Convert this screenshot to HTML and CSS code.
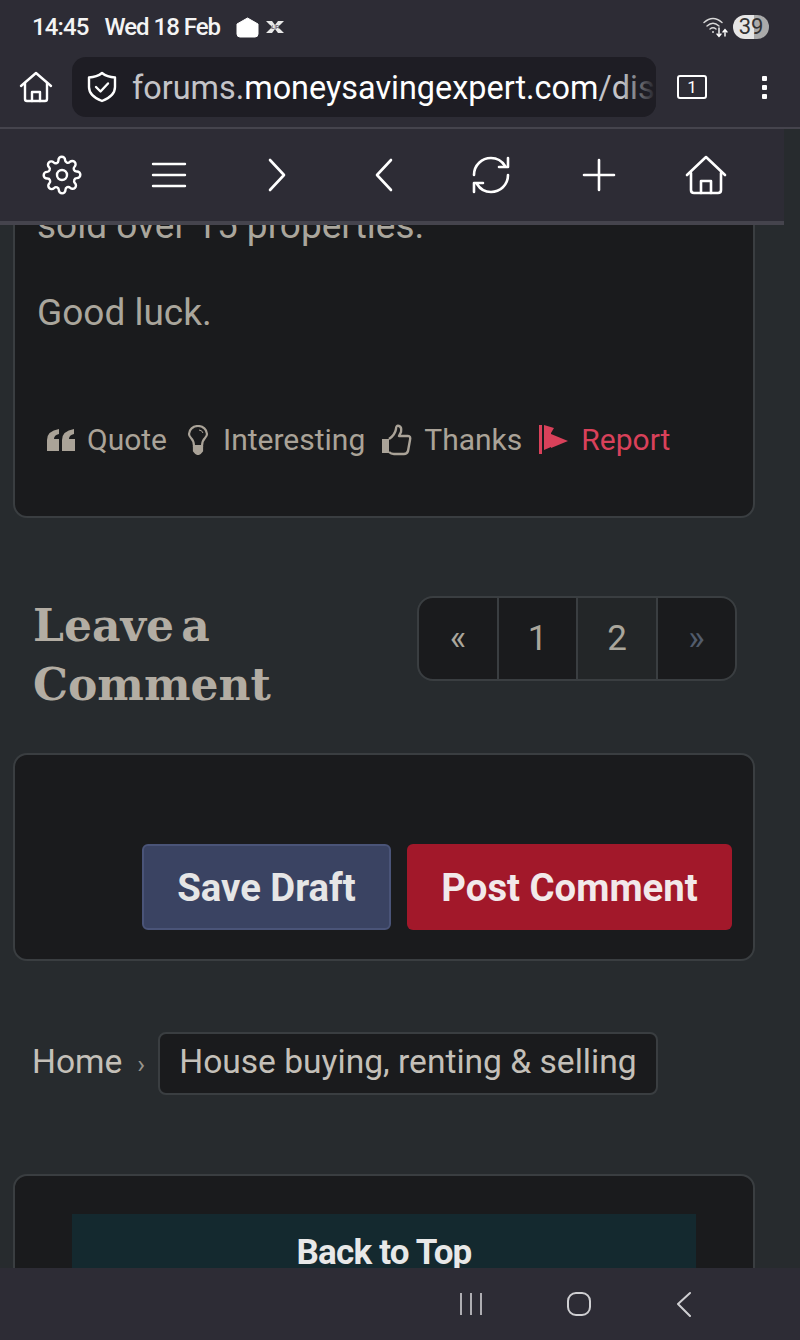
FILE: index.html
```html
<!DOCTYPE html>
<html lang="en">
<head>
<meta charset="UTF-8" />
<title>Leave a Comment</title>
<meta name="viewport" content="width=device-width, initial-scale=1.0" />
<link rel="stylesheet" href="styles.css">
</head>
<body>
<div id="screen">
    <header id="chrome">
        <div class="status">
            <span class="clock">14:45</span>
            <span class="date">Wed 18 Feb</span>
            <svg class="st-shape" width="23" height="21" viewBox="0 0 23 21"><path d="M11.5 1 L22 7 V17 Q22 20 19 20 H4 Q1 20 1 17 V7 Z" fill="#fff" stroke="#fff" stroke-linejoin="round"/></svg>
            <svg class="st-halifax" width="20" height="14" viewBox="0 0 20 14">
                <path d="M1 1 H7 L10 5 L13 1 H19 L13 7 L19 13 H13 L10 9 L7 13 H1 L7 7 Z" fill="#e8e8e8"/>
                <text x="10" y="8.5" text-anchor="middle" class="halifax-txt">HALIFAX</text>
            </svg>
            <span class="status-gap"></span>
            <svg class="st-wifi" width="26" height="22" viewBox="0 0 26 22" fill="none" stroke="#d8d8d8" stroke-width="1.4" stroke-linecap="round">
                <path d="M1 6.5 Q10 -1.5 19 6.5"/>
                <path d="M4 10 Q10 4.5 16 10"/>
                <path d="M7 13 Q10 10.5 13 13"/>
                <circle cx="10" cy="16" r="1" fill="#d8d8d8" stroke="none"/>
                <path d="M16 12 V20 M14 18 L16 20.5 L18 18" stroke="#fff"/>
                <path d="M22 20 V14 M20 16 L22 13.5 L24 16" stroke="#fff"/>
            </svg>
            <span class="battery">39</span>
        </div>
        <div class="urlrow">
            <svg class="icon" width="34" height="34" viewBox="0 0 34 34" fill="none" stroke="#fff" stroke-width="2.4" stroke-linejoin="round" stroke-linecap="round">
                <path d="M2 16 L17 3 L32 16"/>
                <path d="M6 13 V29 Q6 31 8 31 H26 Q28 31 28 29 V13"/>
                <path d="M13 31 V22 H21 V31"/>
            </svg>
            <div class="urlbar">
                <svg class="icon" width="30" height="32" viewBox="0 0 30 32" fill="none" stroke="#fff" stroke-width="2.4" stroke-linejoin="round" stroke-linecap="round">
                    <path d="M15 2 Q20 6 28 6.5 V16 Q28 25 15 30 Q2 25 2 16 V6.5 Q10 6 15 2 Z"/>
                    <path d="M9 16 L13.5 20.5 L21 12.5"/>
                </svg>
                <div class="urltext"><span class="dim">forums.</span>moneysavingexpert.com<span class="dim">/dis</span></div>
            </div>
            <div class="tabcount">1</div>
            <div class="kebab"><i></i><i></i><i></i></div>
        </div>
    </header>

    <nav id="toolbar">
        <svg width="40" height="40" viewBox="0 0 24 24" fill="none" stroke="#fff" stroke-width="1.45" stroke-linejoin="round" stroke-linecap="round">
            <circle cx="12" cy="12" r="3"/>
            <path d="M19.4 15a1.65 1.65 0 0 0 .33 1.82l.06.06a2 2 0 1 1-2.83 2.83l-.06-.06a1.65 1.65 0 0 0-2.82 1.17V21a2 2 0 1 1-4 0v-.09a1.65 1.65 0 0 0-2.82-1.12l-.06.06a2 2 0 1 1-2.83-2.83l.06-.06a1.65 1.65 0 0 0-1.17-2.82H3a2 2 0 1 1 0-4h.09a1.65 1.65 0 0 0 1.12-2.82l-.06-.06a2 2 0 1 1 2.83-2.83l.06.06a1.65 1.65 0 0 0 2.82-1.17V3a2 2 0 1 1 4 0v.09a1.65 1.65 0 0 0 2.82 1.12l.06-.06a2 2 0 1 1 2.83 2.83l-.06.06a1.65 1.65 0 0 0 1.17 2.82H21a2 2 0 1 1 0 4h-.09a1.65 1.65 0 0 0-1.51 1z"/>
        </svg>
        <svg width="36" height="26" viewBox="0 0 36 26" fill="none" stroke="#fff" stroke-width="2.4" stroke-linecap="round">
            <path d="M2 2 H34 M2 13 H34 M2 24 H34"/>
        </svg>
        <svg width="20" height="34" viewBox="0 0 20 34" fill="none" stroke="#fff" stroke-width="2.6" stroke-linecap="round" stroke-linejoin="round">
            <path d="M3 2 L17 17 L3 32"/>
        </svg>
        <svg width="20" height="34" viewBox="0 0 20 34" fill="none" stroke="#fff" stroke-width="2.6" stroke-linecap="round" stroke-linejoin="round">
            <path d="M17 2 L3 17 L17 32"/>
        </svg>
        <svg width="40" height="38" viewBox="0 0 40 38" fill="none" stroke="#fff" stroke-width="2.6" stroke-linecap="round" stroke-linejoin="round">
            <path d="M3 19 C3 9 11 2 20 2 C26 2 31 5 34 10"/>
            <path d="M37 2 V11 H28"/>
            <path d="M37 19 C37 29 29 36 20 36 C14 36 9 33 6 28"/>
            <path d="M3 36 V27 H12"/>
        </svg>
        <svg width="34" height="34" viewBox="0 0 34 34" fill="none" stroke="#fff" stroke-width="2.6" stroke-linecap="round">
            <path d="M2 17 H32 M17 2 V32"/>
        </svg>
        <svg width="42" height="40" viewBox="0 0 42 40" fill="none" stroke="#fff" stroke-width="2.6" stroke-linejoin="round" stroke-linecap="round">
            <path d="M2 20 L21 2 L40 20"/>
            <path d="M6 18 V35 Q6 38 9 38 H33 Q36 38 36 35 V18"/>
            <path d="M16 38 V26 H26 V38"/>
        </svg>
    </nav>

    <main id="page">
        <section class="card post">
            <p class="post-text">sold over 15 properties.</p>
            <p class="post-text">Good luck.</p>
            <div class="actions">
                <a class="action">
                    <svg width="28" height="22" viewBox="0 0 28 22" fill="#aaa398"><path d="M0 22 V11 Q0 2 12 0 V5 Q7 6 7 10 H12 V22 Z"/><path d="M15 22 V11 Q15 2 27 0 V5 Q22 6 22 10 H28 V22 Z"/></svg>
                    Quote
                </a>
                <a class="action">
                    <svg width="27" height="30" viewBox="-3 0 27 30" fill="none" stroke="#aaa398" stroke-width="2.2"><path d="M7 21 Q7 16 4 13 Q2 11 2 9 A9 8 0 0 1 20 9 Q20 11 18 13 Q15 16 15 21 Z"/><path d="M7 22 H15 V26 Q13 29 11 29 Q9 29 7 26 Z" fill="#aaa398"/><path d="M12 5 Q15 5 16 8" stroke-width="1"/></svg>
                    Interesting
                </a>
                <a class="action">
                    <svg width="30" height="32" viewBox="0 0 30 32" fill="none" stroke="#aaa398" stroke-width="2.4" stroke-linejoin="round"><path d="M0 15 H7 V29 H0 Z" fill="#aaa398" stroke="none"/><path d="M7 15 Q13 11 14 5 Q14 1 17 2 Q20 3 19 8 L17 12 H26 Q29 12 28 16 L26 27 Q25 30 22 30 H12 Q9 30 7 28"/></svg>
                    Thanks
                </a>
                <a class="action report">
                    <svg width="30" height="30" viewBox="0 0 30 30" fill="#d9415a"><path d="M0 0 H3 V29 H0 Z"/><path d="M5 0 L15 3 L12 8 V22 L5 25 Z"/><path d="M12 9 L29 16 L12 23 Z"/></svg>
                    Report
                </a>
            </div>
        </section>

        <div class="comment-head">
            <h2>Leave a Comment</h2>
            <div class="pager">
                <span class="pg">«</span>
                <span class="pg num1">1</span>
                <span class="pg cur">2</span>
                <span class="pg off">»</span>
            </div>
        </div>

        <section class="card composer">
            <button class="btn draft">Save Draft</button>
            <button class="btn submit">Post Comment</button>
        </section>

        <div class="crumbs">
            <span>Home</span>
            <span class="sep">›</span>
            <span class="crumb-pill">House buying, renting &amp; selling</span>
        </div>

        <section class="card top-card">
            <div class="back-top">Back to Top</div>
        </section>
    </main>

    <footer id="navbar">
        <svg width="24" height="24" viewBox="0 0 24 24" fill="none" stroke="#cfcfd2" stroke-width="1.6"><path d="M2 1 V23 M12 1 V23 M22 1 V23"/></svg>
        <svg width="26" height="26" viewBox="0 0 26 26" fill="none" stroke="#cfcfd2" stroke-width="2"><rect x="2" y="2" width="22" height="22" rx="8"/></svg>
        <svg width="18" height="26" viewBox="0 0 18 26" fill="none" stroke="#cfcfd2" stroke-width="2" stroke-linecap="round" stroke-linejoin="round"><path d="M15 2 L3 13 L15 25"/></svg>
    </footer>
</div>
</body>
</html>
```

FILE: styles.css
```css
* {
    box-sizing: border-box;
}
body {
    margin: 0;
    background: #272b2e;
    font-family: 'Roboto', sans-serif;
    overflow: hidden;
}
#screen {
    display: flex;
    flex-direction: column;
    width: 800px;
    height: 1340px;
    overflow: hidden;
}

/* browser chrome */
#chrome {
    background: #2d2c35;
    height: 129px;
    border-bottom: 2px solid #45444d;
    flex: none;
}
.status {
    display: flex;
    align-items: center;
    height: 57px;
    padding: 0 31px 4px 32px;
    color: #f4f4f4;
    font-size: 24px;
    font-weight: 500;
}
.clock {
    letter-spacing: -0.9px;
}
.date {
    margin-left: 16px;
    letter-spacing: -1px;
}
.st-shape {
    margin-left: 16px;
    margin-top: 2px;
}
.st-halifax {
    margin-left: 6px;
}
.halifax-txt {
    font-family: 'Liberation Sans', sans-serif;
    font-size: 5px;
    fill: #2d2c35;
}
.status-gap {
    flex: 1;
}
.st-wifi {
    margin-right: 4px;
}
.battery {
    width: 36px;
    height: 24px;
    border-radius: 12px;
    background: linear-gradient(90deg, #e6e6e6 58%, #aaaaaa 58%);
    color: #333;
    font-size: 22px;
    font-weight: 400;
    line-height: 24px;
    text-align: center;
}
.urlrow {
    display: flex;
    align-items: center;
    height: 70px;
    padding: 0 0 10px 19px;
}
.icon {
    flex: none;
}
.urlbar {
    position: relative;
    display: flex;
    align-items: center;
    width: 584px;
    height: 60px;
    margin-left: 19px;
    padding: 0 0 0 15px;
    background: #1e1d24;
    border-radius: 14px;
    overflow: hidden;
}
.urltext {
    margin: 2px 0 0 15px;
    color: #fff;
    font-size: 32.4px;
    white-space: nowrap;
}
.urltext .dim {
    color: #c4c4c8;
}
.urlbar::after {
    content: "";
    position: absolute;
    top: 0;
    right: 0;
    width: 34px;
    height: 100%;
    background: linear-gradient(90deg, rgba(30, 29, 36, 0), #1e1d24);
}
.tabcount {
    width: 30px;
    height: 24px;
    margin-left: 21px;
    border: 2px solid #fff;
    border-radius: 3px;
    color: #fff;
    font-size: 17px;
    line-height: 20px;
    text-align: center;
}
.kebab {
    display: flex;
    flex-direction: column;
    gap: 4px;
    margin-left: 55px;
}
.kebab i {
    display: block;
    width: 5px;
    height: 5px;
    background: #fff;
    border-radius: 1px;
}

#toolbar {
    display: grid;
    grid-template-columns: repeat(7, 1fr);
    align-items: center;
    justify-items: center;
    position: relative;
    z-index: 2;
    flex: none;
    width: 784px;
    height: 96px;
    padding: 0 24px 0 8px;
    background: #2d2c35;
    border-bottom: 4px solid #45444d;
}

/* page */
#page {
    flex: 1;
    min-height: 0;
    overflow: hidden;
    padding: 0 45px 0 13px;
    color: #aaa398;
}
.card {
    background: #1a1b1d;
    border: 2px solid #3a3e41;
    border-radius: 14px;
}
.post {
    margin-top: -22px;
    height: 315px;
    padding: 0 23px 0 22px;
}
.post-text {
    margin: 0 0 45px;
    font-size: 37px;
    line-height: 42px;
    color: #aaa69c;
}
.actions {
    display: flex;
    align-items: center;
    gap: 17px;
    margin-top: 88px;
    margin-left: 10px;
    font-size: 30px;
    white-space: nowrap;
}
.action {
    display: flex;
    align-items: center;
    gap: 12px;
}
.report {
    color: #d9415a;
}
.comment-head {
    display: flex;
    justify-content: space-between;
    align-items: flex-start;
    margin-top: 78px;
    padding: 0 18px 0 20px;
}
.comment-head h2 {
    width: 300px;
    margin: 0;
    font-family: 'DejaVu Serif', serif;
    font-size: 44px;
    font-weight: 700;
    line-height: 59px;
    word-spacing: -8px;
    color: #b3ada3;
}
.pager {
    display: flex;
    height: 85px;
    background: #1a1b1d;
    border: 2px solid #3a3e41;
    border-radius: 16px;
    overflow: hidden;
}
.pg {
    width: 80px;
    line-height: 81px;
    text-align: center;
    font-size: 35px;
    color: #aaa69c;
    border-right: 2px solid #3a3e41;
}
.pg.num1 {
    width: 79px;
}
.pg.cur {
    background: #232628;
}
.pg.off {
    width: 77px;
    border-right: 0;
    color: #525c6c;
}
.composer {
    display: flex;
    justify-content: flex-end;
    gap: 16px;
    height: 208px;
    margin-top: 39px;
    padding: 89px 21px 0 0;
}
.btn {
    height: 86px;
    border-radius: 6px;
    font-family: 'Roboto', sans-serif;
    font-size: 38.3px;
    font-weight: 700;
}
.draft {
    width: 249px;
    background: #3a4362;
    border: 2px solid #4a5478;
    color: #e6e6e6;
}
.submit {
    width: 325px;
    background: #a2182a;
    border: 0;
    color: #f2e9ea;
}
.crumbs {
    display: flex;
    align-items: baseline;
    height: 63px;
    margin-top: 71px;
    padding-left: 19px;
    font-size: 33.6px;
    color: #c4c0b9;
}
.sep {
    margin: 0 13px 0 15px;
    color: #98948c;
    font-size: 26px;
}
.crumb-pill {
    height: 63px;
    padding: 0 19px;
    font-size: 33.6px;
    line-height: 56px;
    background: #1a1b1d;
    border: 2px solid #3a3e41;
    border-radius: 8px;
    white-space: nowrap;
}
.top-card {
    height: 200px;
    margin-top: 79px;
    padding: 38px 57px 0;
}
.back-top {
    height: 120px;
    padding-top: 18px;
    background: #14292f;
    color: #e8e8e8;
    font-size: 35px;
    font-weight: 700;
    letter-spacing: -0.8px;
    text-align: center;
}

/* android nav */
#navbar {
    display: flex;
    align-items: center;
    justify-content: flex-end;
    gap: 83px;
    flex: none;
    height: 72px;
    padding: 0 107px 0 0;
    background: #2d2c35;
}
```
